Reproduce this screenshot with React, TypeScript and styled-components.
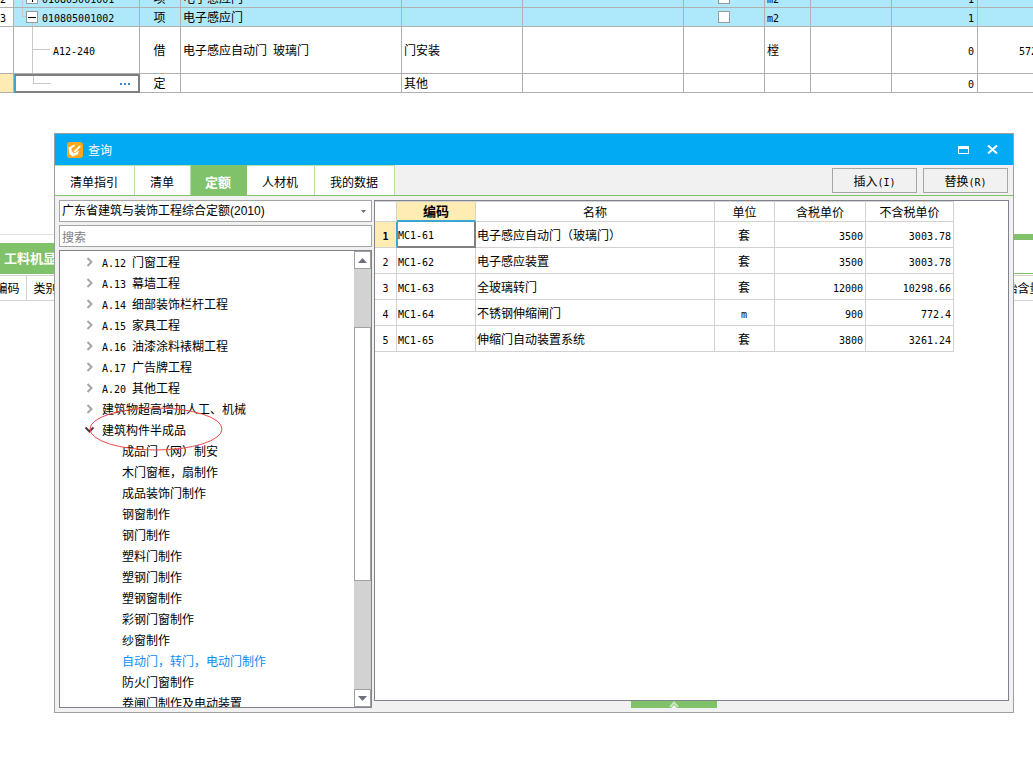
import React from "react";
import styled, { createGlobalStyle, css } from "styled-components";

const colors = {
  green: "#80c269",
  paleGreen: "#b3e39f",
  blue: "#02a9f3",
  rowBlue: "#aee9fb",
  cream: "#ffecb3",
  focus: "#3ba6d2",
  gridLine: "#b0b0b0",
  lightLine: "#d2d2d2",
  frame: "#7f838c",
  panel: "#f1f1f1",
};

const GlobalStyle = createGlobalStyle`
  * { box-sizing: border-box; }
  body {
    margin: 0;
    background: #fff;
    color: #000;
    font: 12px/18px "Noto Sans CJK SC", sans-serif;
  }
  button, input, select { font: inherit; color: inherit; margin: 0; }
  table { border-collapse: separate; border-spacing: 0; table-layout: fixed; }
  th, td { padding: 0; font-weight: normal; white-space: nowrap; overflow: hidden; }
`;

const Page = styled.div`
  position: relative;
  min-height: 100vh;
  overflow: hidden;
`;

const Code = styled.span`
  font-family: "DejaVu Sans Mono", monospace;
  font-size: 10px;
  line-height: 12px;
  white-space: pre;
`;

/* ---------- bill of quantities behind the dialog ---------- */

const SheetArea = styled.div`
  overflow: hidden;
  height: 93px;
`;

const Sheet = styled.table`
  width: 1059px;
  margin-top: -11px;
  line-height: 16px;
`;

const SheetRow = styled.tr<{ $tall?: boolean; $tinted?: boolean }>`
  height: ${(p) => (p.$tall ? 47 : 19)}px;
  background: ${(p) => (p.$tinted ? colors.rowBlue : "#fff")};
`;

const SheetCell = styled.td<{ $align?: string }>`
  padding: 0 3px 0 2px;
  border-right: 1px solid ${colors.gridLine};
  border-bottom: 1px solid ${colors.gridLine};
  text-align: ${(p) => p.$align ?? "left"};
  vertical-align: middle;
`;

const SheetNumber = styled(SheetCell)<{ $current?: boolean }>`
  padding: 0;
  background: ${(p) => (p.$current ? colors.cream : "#fff")};
`;

const OutlineCell = styled(SheetCell)<{ $current?: boolean }>`
  padding: 0;
  ${(p) =>
    p.$current &&
    css`
      border: 2px solid #808080;
      border-left-color: ${colors.focus};
    `}
`;

const Outline = styled.div`
  display: flex;
  align-items: center;
  svg { flex: none; display: block; }
`;

const MoreButton = styled.button`
  display: flex;
  gap: 2px;
  margin-left: auto;
  padding: 4px 8px 4px 4px;
  border: 0;
  background: none;
`;

const MoreDot = styled.span`
  width: 2px;
  height: 2px;
  background: #3a87c8;
`;

const SheetCheck = styled.input`
  appearance: none;
  display: block;
  width: 12px;
  height: 12px;
  margin: 0 auto;
  border: 1px solid #999;
  background: #fff;
`;

/* ---------- lower panel behind the dialog ---------- */

const LowerPanel = styled.section`
  margin-top: 141px;
  overflow: hidden;
`;

const Splitter = styled.div`
  display: flex;
  height: 6px;
`;

const SplitterLine = styled.div`
  flex: 1;
  border-top: 1px solid #e0e0e0;
`;

const SplitterBar = styled.div`
  flex: 1;
  background: ${colors.green};
`;

const LowerTabs = styled.div`
  margin-top: 3px;
  border-bottom: 1px solid ${colors.green};
`;

const LowerTab = styled.button`
  display: block;
  height: 30px;
  padding: 0 4px;
  border: 0;
  background: ${colors.green};
  color: #fff;
  font-weight: bold;
  font-size: 13px;
`;

const LowerTable = styled.table`
  width: calc(100% + 26px);
  margin: 1px 0 0 -11px;
`;

const LowerHead = styled.th`
  height: 26px;
  border: solid ${colors.lightLine};
  border-width: 1px 1px 1px 0;
`;

/* ---------- query dialog ---------- */

const Dialog = styled.div`
  position: absolute;
  inset: 133px 19px 45px 54px;
  display: flex;
  flex-direction: column;
  border: 1px solid #a0a0a0;
  background: ${colors.panel};
`;

const TitleBar = styled.header`
  display: flex;
  align-items: center;
  flex: none;
  height: 31px;
  padding: 0 6px 0 12px;
  background: ${colors.blue};
  color: #fff;
`;

const Title = styled.h1`
  flex: 1;
  margin: 0 0 0 5px;
  font-size: 12px;
  line-height: 18px;
  font-weight: normal;
`;

const WindowButton = styled.button`
  display: flex;
  align-items: center;
  justify-content: center;
  width: 29px;
  height: 24px;
  padding: 0;
  border: 0;
  background: none;
`;

const Toolbar = styled.div`
  display: flex;
  flex: none;
  height: 31px;
  border-bottom: 1px solid ${colors.green};
`;

const Tab = styled.button<{ $active?: boolean }>`
  padding: 2px 16px 0 15px;
  border: solid ${colors.paleGreen};
  border-width: 1px 1px 0 0;
  background: #fff;
  ${(p) =>
    p.$active &&
    css`
      padding: 2px 15px 0 14px;
      border-color: ${colors.green};
      background: ${colors.green};
      color: #fff;
      font-weight: bold;
      font-size: 13px;
    `}
`;

const Actions = styled.div`
  display: flex;
  gap: 6px;
  margin: 3px 5px 0 auto;
`;

const ActionButton = styled.button`
  width: 85px;
  height: 25px;
  padding: 0;
  border: 1px solid #a5a5a5;
  background: ${colors.panel};
`;

const Body = styled.div`
  display: flex;
  flex: 1;
  gap: 2px;
  min-height: 0;
  padding: 4px;
`;

const Sidebar = styled.aside`
  display: flex;
  flex-direction: column;
  flex: none;
  gap: 3px;
  width: 313px;
`;

const SelectFrame = styled.div`
  display: flex;
  align-items: center;
  flex: none;
  height: 22px;
  padding-right: 5px;
  border: 1px solid #a5a5a5;
  background: #fff;
`;

const LibrarySelect = styled.select`
  appearance: none;
  flex: 1;
  height: 20px;
  padding: 0 2px;
  border: 0;
  background: none;
  font-family: "Liberation Sans", "Noto Sans CJK SC", sans-serif;
  outline: 0;
`;

const SearchInput = styled.input`
  flex: none;
  height: 22px;
  padding: 0 2px;
  border: 1px solid #a5a5a5;
  background: #fff;
  &::placeholder { color: #808080; opacity: 1; }
`;

const TreeFrame = styled.div`
  display: flex;
  flex: 1;
  min-height: 0;
  border: 1px solid ${colors.frame};
  background: #fff;
`;

const Tree = styled.ul`
  flex: 1;
  margin: 0;
  padding: 0;
  overflow: hidden;
  list-style: none;
`;

const TreeItem = styled.li<{ $child?: boolean; $selected?: boolean }>`
  position: relative;
  display: flex;
  align-items: center;
  height: 21px;
  padding-left: ${(p) => (p.$child ? 62 : 24)}px;
  color: ${(p) => (p.$selected ? "#0a8cf5" : "#000")};
  white-space: nowrap;
`;

const TreeIcon = styled.svg`
  width: 12px;
  height: 12px;
  margin-right: 6px;
`;

const Marker = styled.svg`
  position: absolute;
  left: 29px;
  top: -12px;
  z-index: 1;
  width: 134px;
  height: 44px;
`;

const Scrollbar = styled.div`
  display: flex;
  flex-direction: column;
  width: 17px;
  background: #d2d2d2;
`;

const ScrollButton = styled.button`
  display: flex;
  align-items: center;
  justify-content: center;
  height: 18px;
  padding: 0;
  border: 1px solid #a0a0a0;
  background: #fff;
`;

const ScrollTrack = styled.div`
  display: flex;
  flex-direction: column;
  flex: 1;
`;

const ScrollSpace = styled.div<{ $share: number }>`
  flex: ${(p) => p.$share};
`;

const ScrollThumb = styled.div`
  flex: 254;
  border: 1px solid #a0a0a0;
  background: #fff;
`;

const Results = styled.main`
  display: flex;
  flex-direction: column;
  flex: 1;
  min-width: 0;
`;

const ResultFrame = styled.div`
  flex: 1;
  min-height: 0;
  overflow: hidden;
  border: 1px solid ${colors.frame};
  background: #fff;
`;

const ResultTable = styled.table`
  width: 579px;
`;

const ResultHead = styled.th<{ $active?: boolean }>`
  height: 21px;
  border: solid ${colors.lightLine};
  border-width: 1px 1px 1px 0;
  ${(p) =>
    p.$active &&
    css`
      border-bottom: 2px solid ${colors.focus};
      background: ${colors.cream};
      font-weight: bold;
      font-size: 13px;
    `}
`;

const ResultCell = styled.td<{ $align?: string; $current?: boolean }>`
  height: 26px;
  padding: 0 2px 0 1px;
  border: solid ${colors.lightLine};
  border-width: 0 1px 1px 0;
  text-align: ${(p) => p.$align ?? "left"};
  ${(p) =>
    p.$current &&
    css`
      padding-left: 0;
      border-color: #808080;
      border-width: 0 2px 2px 1px;
      border-left-color: ${colors.focus};
    `}
`;

const ResultNumber = styled(ResultHead)<{ $current?: boolean }>`
  height: 26px;
  border-top: 0;
  ${(p) =>
    p.$current &&
    css`
      border-right-color: ${colors.focus};
      background: ${colors.cream};
      font-weight: bold;
    `}
`;

const Expander = styled.button`
  display: flex;
  justify-content: center;
  flex: none;
  width: 86px;
  height: 7px;
  margin-left: 257px;
  padding: 0;
  border: 0;
  background: ${colors.green};
`;

/** Sets the half-width runs of a label in the monospaced face. */
function Label({ text }: { text: string }) {
  const runs = text.match(/[\x20-\x7e]+|[^\x20-\x7e]+/g) ?? [];
  return (
    <span>
      {runs.map((run, i) => (/^[\x20-\x7e]/.test(run) ? <Code key={i}>{run}</Code> : run))}
    </span>
  );
}

const sheetColumns = [14, 126, 41, 221, 121, 161, 81, 46, 81, 86, 81];

function BillRow({ no, code, expanded }: { no: string; code: string; expanded?: boolean }) {
  return (
    <SheetRow $tinted>
      <SheetNumber><Label text={no} /></SheetNumber>
      <OutlineCell>
        <Outline>
          <svg width="28" height="18" fill="none" shapeRendering="crispEdges">
            <path d={expanded ? "M8.5 0v8.5h4M18.5 15v3" : "M8.5 0v18"} stroke="#c8c8c8" />
            <rect x="12.5" y="3.5" width="11" height="11" fill="#fff" stroke="#999" />
            <path d={expanded ? "M14 9h8" : "M14 9h8M18 5v8"} stroke="#000" />
          </svg>
          <Label text={code} />
        </Outline>
      </OutlineCell>
      <SheetCell $align="center">项</SheetCell>
      <SheetCell>电子感应门</SheetCell>
      <SheetCell />
      <SheetCell />
      <SheetCell><SheetCheck type="checkbox" aria-label={code} /></SheetCell>
      <SheetCell><Label text="m2" /></SheetCell>
      <SheetCell />
      <SheetCell $align="right"><Label text="1" /></SheetCell>
      <SheetCell />
    </SheetRow>
  );
}

function BillSheet() {
  return (
    <SheetArea>
      <Sheet>
        <colgroup>{sheetColumns.map((w, i) => <col key={i} width={w} />)}</colgroup>
        <tbody>
          <BillRow no="2" code="010805001001" />
          <BillRow no="3" code="010805001002" expanded />
          <SheetRow $tall>
            <SheetNumber />
            <OutlineCell>
              <Outline>
                <svg width="39" height="46" fill="none" shapeRendering="crispEdges">
                  <path d="M18.5 0v46M19 22.5h17" stroke="#c8c8c8" />
                </svg>
                <Label text="A12-240" />
              </Outline>
            </OutlineCell>
            <SheetCell $align="center">借</SheetCell>
            <SheetCell><Label text="电子感应自动门 玻璃门" /></SheetCell>
            <SheetCell>门安装</SheetCell>
            <SheetCell />
            <SheetCell />
            <SheetCell>樘</SheetCell>
            <SheetCell />
            <SheetCell $align="right"><Label text="0" /></SheetCell>
            <SheetCell $align="right"><Label text="572.15" /></SheetCell>
          </SheetRow>
          <SheetRow>
            <SheetNumber $current />
            <OutlineCell $current>
              <Outline>
                <svg width="36" height="15" fill="none" shapeRendering="crispEdges">
                  <path d="M17.5 0v7.5H35" stroke="#c8c8c8" />
                </svg>
                <MoreButton aria-label="选择定额"><MoreDot /><MoreDot /><MoreDot /></MoreButton>
              </Outline>
            </OutlineCell>
            <SheetCell $align="center">定</SheetCell>
            <SheetCell />
            <SheetCell>其他</SheetCell>
            <SheetCell />
            <SheetCell />
            <SheetCell />
            <SheetCell />
            <SheetCell $align="right"><Label text="0" /></SheetCell>
            <SheetCell />
          </SheetRow>
        </tbody>
      </Sheet>
    </SheetArea>
  );
}

const chapters = [
  "A.12 门窗工程",
  "A.13 幕墙工程",
  "A.14 细部装饰栏杆工程",
  "A.15 家具工程",
  "A.16 油漆涂料裱糊工程",
  "A.17 广告牌工程",
  "A.20 其他工程",
  "建筑物超高增加人工、机械",
];

const products = [
  "成品门（网）制安",
  "木门窗框，扇制作",
  "成品装饰门制作",
  "钢窗制作",
  "钢门制作",
  "塑料门制作",
  "塑钢门制作",
  "塑钢窗制作",
  "彩钢门窗制作",
  "纱窗制作",
  "自动门，转门，电动门制作",
  "防火门窗制作",
  "卷闸门制作及电动装置",
];

const results = [
  ["MC1-61", "电子感应自动门（玻璃门）", "套", "3500", "3003.78"],
  ["MC1-62", "电子感应装置", "套", "3500", "3003.78"],
  ["MC1-63", "全玻璃转门", "套", "12000", "10298.66"],
  ["MC1-64", "不锈钢伸缩闸门", "m", "900", "772.4"],
  ["MC1-65", "伸缩门自动装置系统", "套", "3800", "3261.24"],
];

const resultColumns = [22, 79, 239, 60, 91, 88];
const resultAlign = ["left", "left", "center", "right", "right"];

export default function App() {
  return (
    <Page>
      <GlobalStyle />
      <BillSheet />
      <LowerPanel>
        <Splitter><SplitterLine /><SplitterBar /></Splitter>
        <LowerTabs><LowerTab>工料机显示</LowerTab></LowerTabs>
        <LowerTable>
          <colgroup><col width="38" /><col width="38" /><col /><col width="60" /></colgroup>
          <thead>
            <tr>
              <LowerHead>编码</LowerHead>
              <LowerHead>类别</LowerHead>
              <LowerHead />
              <LowerHead>原始含量</LowerHead>
            </tr>
          </thead>
        </LowerTable>
      </LowerPanel>

      <Dialog role="dialog" aria-label="查询">
        <TitleBar>
          <svg width="16" height="16" viewBox="0 0 16 16" fill="none">
            <rect width="16" height="16" rx="3" fill="#fba81c" />
            <path d="M1.5 5.5 8 2.2l-.6 2.2-3 1.8.6 3L7 10l5-1-1.200 3.600L5.500 14.600 2.400 12z" fill="#fff" />
            <path d="M6 9.500 12.500 3l1.800 1.600L8 11z" fill="#fff" stroke="#fba81c" strokeWidth=".8" />
            <path d="m5.200 8.200 1.600 2.800" stroke="#fba81c" />
          </svg>
          <Title>查询</Title>
          <WindowButton aria-label="最大化">
            <svg width="11" height="8" shapeRendering="crispEdges">
              <path d="M0 0h11v8H0zM1 3v4h9V3z" fill="#fff" fillRule="evenodd" />
            </svg>
          </WindowButton>
          <WindowButton aria-label="关闭">
            <svg width="11" height="9" viewBox="0 0 11 9">
              <path d="m1 .5 9 8m0-8-9 8" stroke="#fff" strokeWidth="2" />
            </svg>
          </WindowButton>
        </TitleBar>

        <Toolbar>
          <Tab>清单指引</Tab>
          <Tab>清单</Tab>
          <Tab $active>定额</Tab>
          <Tab>人材机</Tab>
          <Tab>我的数据</Tab>
          <Actions>
            <ActionButton><Label text="插入(I)" /></ActionButton>
            <ActionButton><Label text="替换(R)" /></ActionButton>
          </Actions>
        </Toolbar>

        <Body>
          <Sidebar>
            <SelectFrame>
              <LibrarySelect aria-label="定额库">
                <option>广东省建筑与装饰工程综合定额(2010)</option>
              </LibrarySelect>
              <svg width="5" height="3"><path d="M0 0h5L2.500 3z" fill="#6b7080" /></svg>
            </SelectFrame>
            <SearchInput placeholder="搜索" aria-label="搜索" />
            <TreeFrame>
              <Tree>
                {chapters.map((name) => (
                  <TreeItem key={name}>
                    <TreeIcon viewBox="0 0 12 12" fill="none">
                      <path d="m3.500 2 4 4-4 4" stroke="#a6a6a6" strokeWidth="2" />
                    </TreeIcon>
                    <Label text={name} />
                  </TreeItem>
                ))}
                <TreeItem>
                  <TreeIcon viewBox="0 0 12 12" fill="none">
                    <path d="m1.500 3.500 4 4 4-4" stroke="#404040" strokeWidth="2" />
                  </TreeIcon>
                  建筑构件半成品
                  <Marker viewBox="0 0 134 44" fill="none">
                    <ellipse cx="67" cy="22" rx="66" ry="21" stroke="#f04848" />
                  </Marker>
                </TreeItem>
                {products.map((name) => (
                  <TreeItem key={name} $child $selected={name.startsWith("自动门")}>{name}</TreeItem>
                ))}
              </Tree>
              <Scrollbar>
                <ScrollButton aria-label="向上滚动">
                  <svg width="9" height="5"><path d="M4.500 0 9 5H0z" fill="#6b7080" /></svg>
                </ScrollButton>
                <ScrollTrack>
                  <ScrollSpace $share={58} />
                  <ScrollThumb />
                  <ScrollSpace $share={109} />
                </ScrollTrack>
                <ScrollButton aria-label="向下滚动">
                  <svg width="9" height="5"><path d="M0 0h9L4.500 5z" fill="#6b7080" /></svg>
                </ScrollButton>
              </Scrollbar>
            </TreeFrame>
          </Sidebar>

          <Results>
            <ResultFrame>
              <ResultTable>
                <colgroup>{resultColumns.map((w, i) => <col key={i} width={w} />)}</colgroup>
                <thead>
                  <tr>
                    <ResultHead />
                    <ResultHead $active>编码</ResultHead>
                    <ResultHead>名称</ResultHead>
                    <ResultHead>单位</ResultHead>
                    <ResultHead>含税单价</ResultHead>
                    <ResultHead>不含税单价</ResultHead>
                  </tr>
                </thead>
                <tbody>
                  {results.map((row, r) => (
                    <tr key={row[0]}>
                      <ResultNumber $current={r === 0}><Label text={String(r + 1)} /></ResultNumber>
                      {row.map((value, c) => (
                        <ResultCell key={c} $align={resultAlign[c]} $current={r === 0 && c === 0}>
                          <Label text={value} />
                        </ResultCell>
                      ))}
                    </tr>
                  ))}
                </tbody>
              </ResultTable>
            </ResultFrame>
            <Expander aria-label="展开">
              <svg width="10" height="7" viewBox="0 0 10 7" fill="none">
                <path d="m1 6 4-4.500L9 6" stroke="#c4e6b8" strokeWidth="2" />
                <path d="m2.500 7 2.500-3 2.500 3z" fill="#fff" />
              </svg>
            </Expander>
          </Results>
        </Body>
      </Dialog>
    </Page>
  );
}
